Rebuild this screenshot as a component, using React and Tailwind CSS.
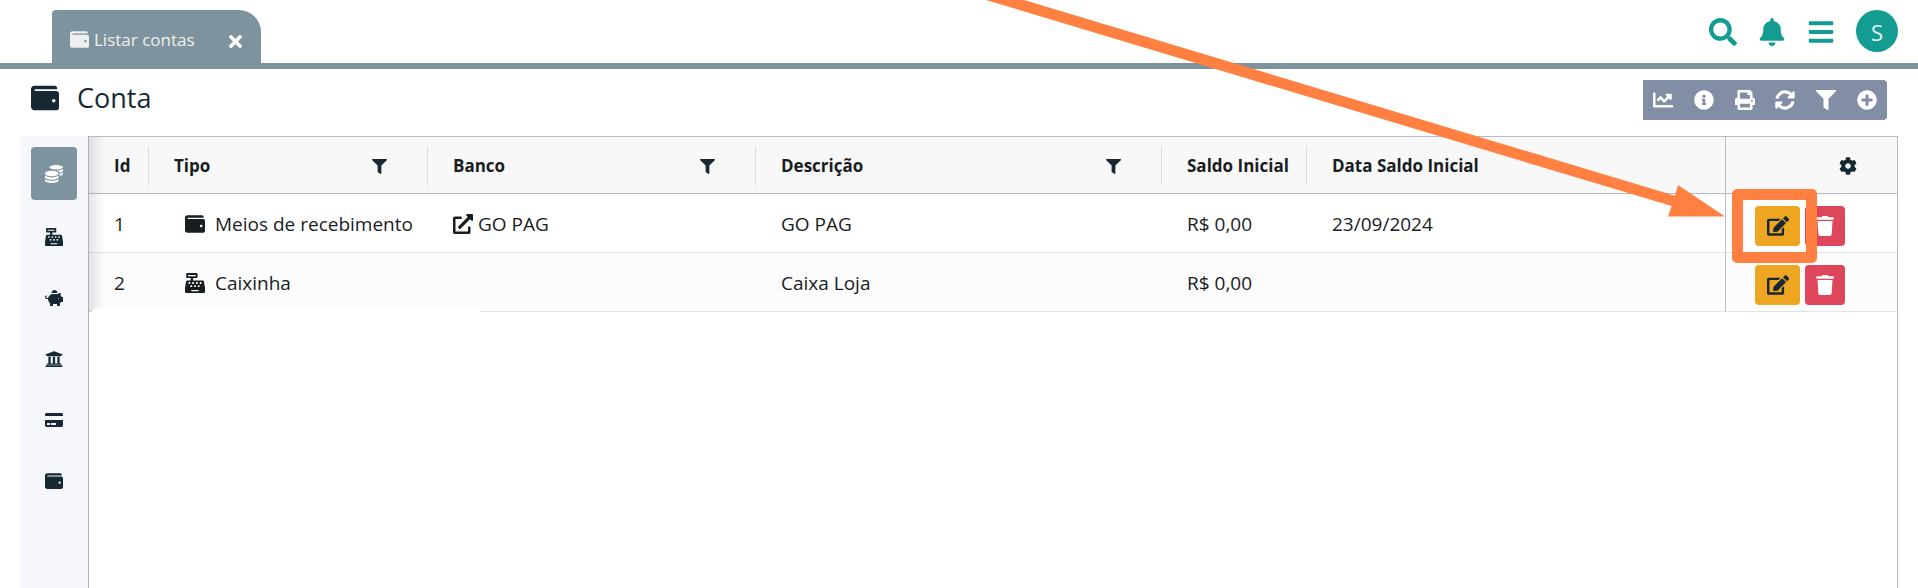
import {
  FaWallet, FaTimes, FaSearch, FaBell, FaBars, FaChartLine, FaInfoCircle, FaPrint,
  FaSyncAlt, FaFilter, FaPlusCircle, FaCoins, FaCashRegister, FaPiggyBank,
  FaUniversity, FaCreditCard, FaCog, FaTrash, FaExternalLinkAlt, FaEdit,
} from "react-icons/fa";

const sections = [
  { label: "Todas", Icon: FaCoins, active: true },
  { label: "Caixinha", Icon: FaCashRegister },
  { label: "Poupança", Icon: FaPiggyBank },
  { label: "Banco", Icon: FaUniversity },
  { label: "Cartão", Icon: FaCreditCard },
  { label: "Meios de recebimento", Icon: FaWallet },
];

const tools = [
  { label: "Gráfico", Icon: FaChartLine },
  { label: "Informações", Icon: FaInfoCircle },
  { label: "Imprimir", Icon: FaPrint },
  { label: "Atualizar", Icon: FaSyncAlt },
  { label: "Filtrar", Icon: FaFilter },
  { label: "Adicionar", Icon: FaPlusCircle },
];

const shortcuts = [
  { label: "Buscar", Icon: FaSearch },
  { label: "Notificações", Icon: FaBell },
  { label: "Menu", Icon: FaBars },
];

const columns = [
  { label: "Id", width: "w-[60px]" },
  { label: "Tipo", width: "w-[279px]", filter: true },
  { label: "Banco", width: "w-[328px]", filter: true },
  { label: "Descrição", width: "w-[406px]", filter: true },
  { label: "Saldo Inicial", width: "w-[145px]" },
  { label: "Data Saldo Inicial", width: "", last: true },
];

const rows = [
  { id: 1, tipo: "Meios de recebimento", Icon: FaWallet, banco: "GO PAG", descricao: "GO PAG", saldo: "R$ 0,00", data: "23/09/2024" },
  { id: 2, tipo: "Caixinha", Icon: FaCashRegister, banco: "", descricao: "Caixa Loja", saldo: "R$ 0,00", data: "", striped: true },
];

function Header() {
  return (
    <header className="flex h-[69px] items-start justify-between border-b-6 border-[#7d939e] pt-[10px] pr-5 pl-[52px]">
      <div className="flex h-[53px] w-[209px] items-center justify-between rounded-tl-[4px] rounded-tr-[22px] bg-[#7d939e] pr-4 pl-[18px]">
        <a href="#contas" className="flex items-center gap-[5px] pt-[6px] text-[17px] text-[#f0f0f0]">
          <FaWallet className="size-[19px]" />
          Listar contas
        </a>
        <button type="button" aria-label="Fechar aba" className="pt-[9px] text-white">
          <FaTimes className="size-[19px]" />
        </button>
      </div>
      <nav className="flex items-center gap-[21px] text-[#139c92]">
        {shortcuts.map(({ label, Icon }) => (
          <button key={label} type="button" aria-label={label} className="flex w-7 justify-center pt-[2px]">
            <Icon className="size-7" />
          </button>
        ))}
        <button type="button" className="size-[42px] rounded-full bg-[#139c92] pt-[2px] text-[22px] text-[#e8f5f4]">S</button>
      </nav>
    </header>
  );
}

function Toolbar() {
  return (
    <div className="flex h-10 w-[244px] rounded-r-[4px] bg-[#828ea6] text-white">
      {tools.map(({ label, Icon }) => (
        <button key={label} type="button" aria-label={label} className="flex flex-1 items-center justify-center">
          <Icon className="size-5" />
        </button>
      ))}
    </div>
  );
}

function Sidebar() {
  return (
    <aside className="flex w-[69px] shrink-0 flex-col items-center gap-2 border-r border-[#adb1bb] bg-[#f5f7fc] pt-[11px]">
      {sections.map(({ label, Icon, active }) => (
        <button
          key={label}
          type="button"
          aria-label={label}
          className={`flex h-[53px] w-[46px] items-center justify-center rounded-[4px] ${active ? "bg-[#7d939e] text-white" : "pt-1 text-[#172833]"}`}
        >
          <Icon className="h-[18px] w-auto" />
        </button>
      ))}
    </aside>
  );
}

function AccountsTable() {
  return (
    <table className="w-full table-fixed border-separate border-spacing-0 text-left text-[#181d1f]">
      <thead>
        <tr className="h-[57px] bg-[#f8f8f8] text-[17px]">
          {columns.map(({ label, width, filter, last }) => (
            <th key={label} scope="col" className={`border-b border-[#b8bcc6] p-0 font-bold ${width}`}>
              <div className={`flex h-[39px] items-center justify-between pt-[2px] pl-[25px] whitespace-nowrap ${last ? "" : "border-r border-[#d9dce1]"}`}>
                {label}
                {filter && (
                  <button type="button" aria-label={`Filtrar ${label}`} className="mr-10 text-[#172833]">
                    <FaFilter className="size-[15px]" />
                  </button>
                )}
              </div>
            </th>
          ))}
          <th scope="col" className="w-[172px] border-b border-l border-[#b8bcc6] p-0 pt-[2px] pl-[113px]">
            <button type="button" aria-label="Configurar colunas" className="block text-[#172833]">
              <FaCog className="size-[18px]" />
            </button>
          </th>
        </tr>
      </thead>
      <tbody>
        {rows.map(({ id, tipo, Icon, banco, descricao, saldo, data, striped }) => (
          <tr key={id} className={`h-[59px] text-[19px] *:border-b *:border-b-[#dde2eb] ${striped ? "bg-[#fcfcfc]" : "bg-white"}`}>
            <td className="p-0 pt-[2px] pl-[25px]">{id}</td>
            <td className="p-0 pt-[2px] pl-9">
              <span className="flex items-center gap-[10px] whitespace-nowrap"><Icon className="size-5" />{tipo}</span>
            </td>
            <td className="p-0 pt-[2px] pl-[25px]">
              {banco && <a href="#banco" className="flex items-center gap-[5px]"><FaExternalLinkAlt className="size-5" />{banco}</a>}
            </td>
            <td className="p-0 pt-[2px] pl-[25px]">{descricao}</td>
            <td className="p-0 pt-[2px] pl-[25px]">{saldo}</td>
            <td className="p-0 pt-[2px] pl-[25px]">{data}</td>
            <td className="border-l border-l-[#b8bcc6] p-0 pt-[2px] pl-[29px]">
              <div className="flex gap-[5px] pt-1">
                <button type="button" aria-label="Editar" className="flex h-10 w-[45px] items-center justify-center rounded-[4px] bg-[#eda522] text-[#172833]">
                  <FaEdit className="h-[22px] w-auto" />
                </button>
                <button type="button" aria-label="Excluir" className="flex size-10 items-center justify-center rounded-[4px] bg-[#de465b] text-white">
                  <FaTrash className="size-5" />
                </button>
              </div>
            </td>
          </tr>
        ))}
      </tbody>
    </table>
  );
}

export default function App() {
  return (
    <div className="relative flex min-h-screen flex-col overflow-hidden bg-white font-['Open_Sans','Noto_Sans',sans-serif]">
      <Header />
      <div className="flex h-[67px] items-start justify-between pt-[11px] pr-[31px] pl-[31px]">
        <h1 className="flex items-center gap-[18px] text-[27px] leading-[36px] text-[#172833]">
          <FaWallet className="size-7" />
          Conta
        </h1>
        <Toolbar />
      </div>
      <main className="flex flex-1 pr-5 pl-5">
        <Sidebar />
        <section className="relative min-w-0 flex-1 border-t border-r border-[#b8bcc6]">
          <AccountsTable />
          <div className="pointer-events-none absolute top-0 left-0 h-[175px] w-4 bg-linear-to-r from-black/10 to-transparent" />
          <div className="absolute top-[170px] left-0 h-[154px] w-[394px] rounded-t-[12px] bg-white" />
        </section>
      </main>
      <svg className="pointer-events-none absolute top-0 right-[193px] h-[218px] w-[740px]" viewBox="0 0 740 218" aria-hidden="true">
        <path d="M1 0H39L690 195.7 693 185 740 216.5H683L686.7 206Z" fill="#ff8040" />
      </svg>
      <div className="pointer-events-none absolute top-[189px] right-[101px] h-[74px] w-[85px] rounded-[5px] border-11 border-[#ff8040]" />
    </div>
  );
}
